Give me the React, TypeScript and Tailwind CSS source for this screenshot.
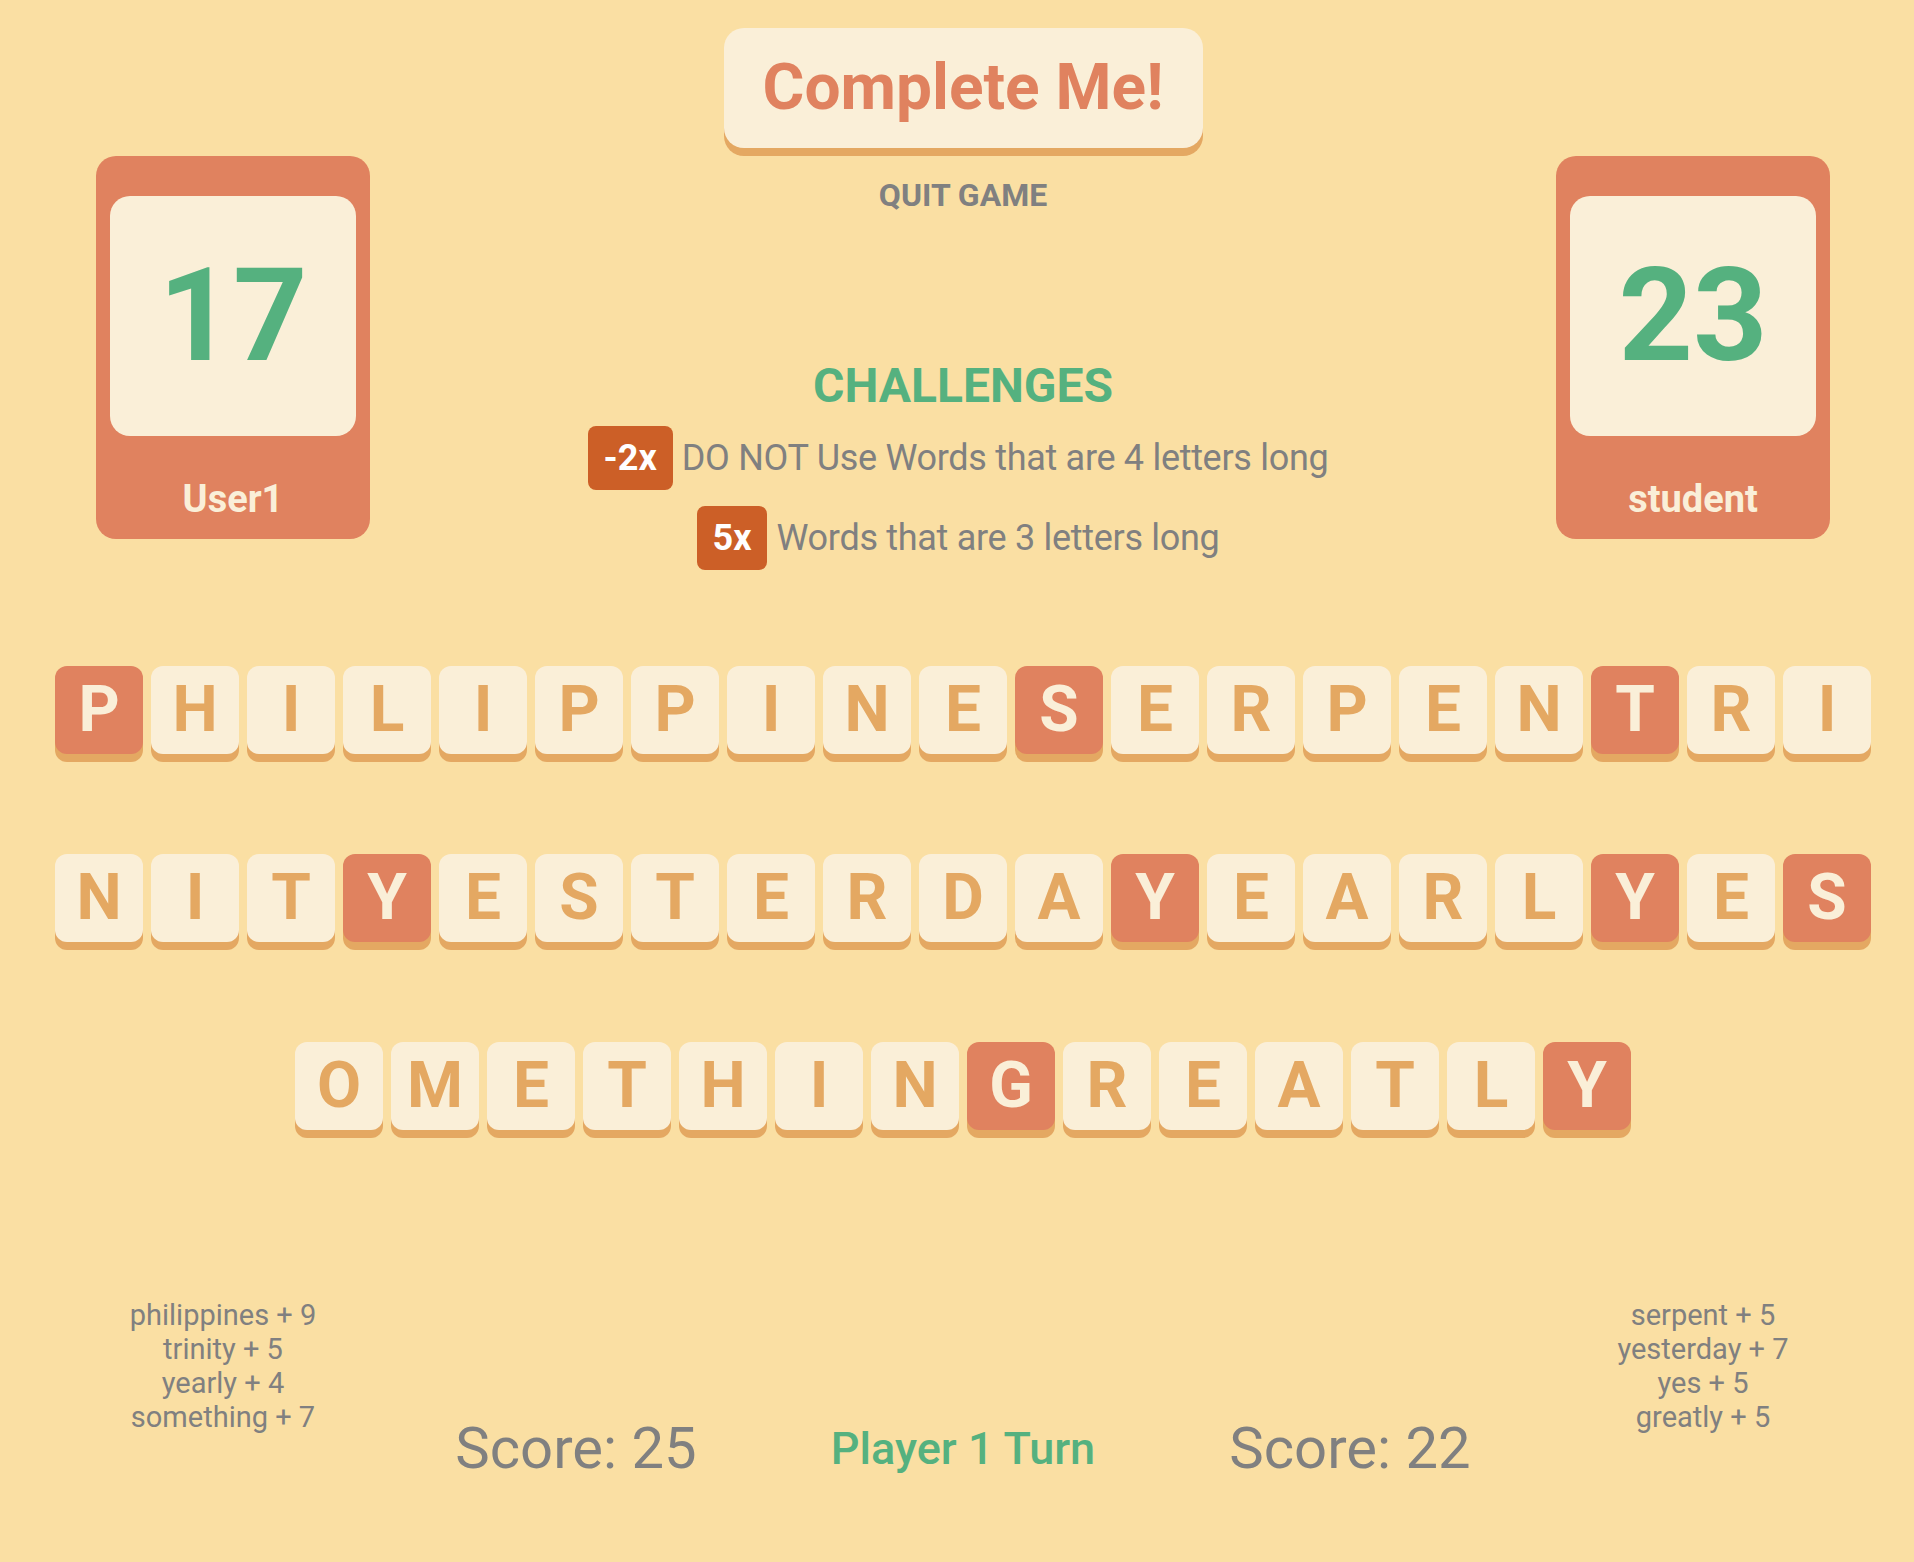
import React from 'react';

const cream = 'bg-[#faefd8]';

const rows: { text: string; hot: number[] }[] = [
  { text: 'PHILIPPINESERPENTRI', hot: [0, 10, 16] },
  { text: 'NITYESTERDAYEARLYES', hot: [3, 11, 16, 18] },
  { text: 'OMETHINGREATLY', hot: [7, 13] },
];

const PlayerCard = ({ count, name }: { count: number; name: string }) => (
  <div className="mt-[156px] w-[274px] h-[383px] rounded-[20px] bg-[#e0825f] px-[14px] pt-[40px] flex flex-col">
    <div className={`h-[240px] rounded-[20px] ${cream} flex items-center justify-center text-[130px] font-bold leading-none text-[#55b17f]`}>
      {count}
    </div>
    <div className="mt-[44px] text-center text-[38px] leading-[38px] font-bold text-[#faefd8]">{name}</div>
  </div>
);

const Tile = ({ letter, hot }: { letter: string; hot: boolean }) => (
  <div
    className={`w-[88px] h-[88px] rounded-xl flex items-center justify-center text-[64px] font-bold leading-none shadow-[0_8px_0_#e4a862] ${
      hot ? 'bg-[#e0825f] text-[#faefd8]' : 'bg-[#faefd8] text-[#e4a862]'
    }`}
  >
    {letter}
  </div>
);

const Challenge = ({ badge, text }: { badge: string; text: string }) => (
  <div className="flex items-center">
    <div className="h-16 px-4 rounded-lg bg-[#cc5f27] flex items-center text-[36px] font-bold text-white leading-none">
      {badge}
    </div>
    <span className="ml-[9px] text-[36px] leading-none tracking-[-0.3px] text-[#808080]">{text}</span>
  </div>
);

const WordList = ({ words }: { words: string[] }) => (
  <div className="w-[250px] text-center text-[29px] leading-[34px] text-[#808080]">
    {words.map((w) => (
      <div key={w}>{w}</div>
    ))}
  </div>
);

export default function App() {
  return (
    <div className="min-h-screen bg-[#fadfa3] pl-[12px] pb-[80px] font-['Roboto',sans-serif]">
      <div className="flex justify-between items-start px-[84px]">
        <PlayerCard count={17} name="User1" />

        <div className="flex flex-col items-center pt-[28px]">
          <div className={`w-[479px] h-[120px] rounded-[20px] ${cream} shadow-[0_8px_0_#e4a862] flex items-center justify-center text-[64px] font-bold leading-none text-[#e0825f]`}>
            Complete Me!
          </div>
          <div className="mt-[31px] text-[32px] leading-[32px] font-bold text-[#808080]">QUIT GAME</div>

          <div className="mt-[151px] text-[48px] leading-none font-bold text-[#55b17f]">CHALLENGES</div>
          <div className="mt-4 mr-[10px] flex flex-col items-center gap-4">
            <Challenge badge="-2x" text="DO NOT Use Words that are 4 letters long" />
            <Challenge badge="5x" text="Words that are 3 letters long" />
          </div>
        </div>

        <PlayerCard count={23} name="student" />
      </div>

      <div className="mt-[96px] flex flex-col items-center gap-[100px]">
        {rows.map((row) => (
          <div key={row.text} className="flex gap-2">
            {row.text.split('').map((ch, i) => (
              <Tile key={i} letter={ch} hot={row.hot.includes(i)} />
            ))}
          </div>
        ))}
      </div>

      <div className="mt-[168px] flex justify-center items-start">
        <WordList words={['philippines + 9', 'trinity + 5', 'yearly + 4', 'something + 7']} />
        <div className="ml-[78px] w-[300px] mt-[115px] text-center text-[58px] leading-[70px] text-[#808080]">Score: 25</div>
        <div className="ml-[87px] w-[300px] mt-[124px] text-center text-[45px] leading-[53px] font-medium text-[#55b17f]">Player 1 Turn</div>
        <div className="ml-[87px] w-[300px] mt-[115px] text-center text-[58px] leading-[70px] text-[#808080]">Score: 22</div>
        <div className="ml-[78px]">
          <WordList words={['serpent + 5', 'yesterday + 7', 'yes + 5', 'greatly + 5']} />
        </div>
      </div>
    </div>
  );
}
